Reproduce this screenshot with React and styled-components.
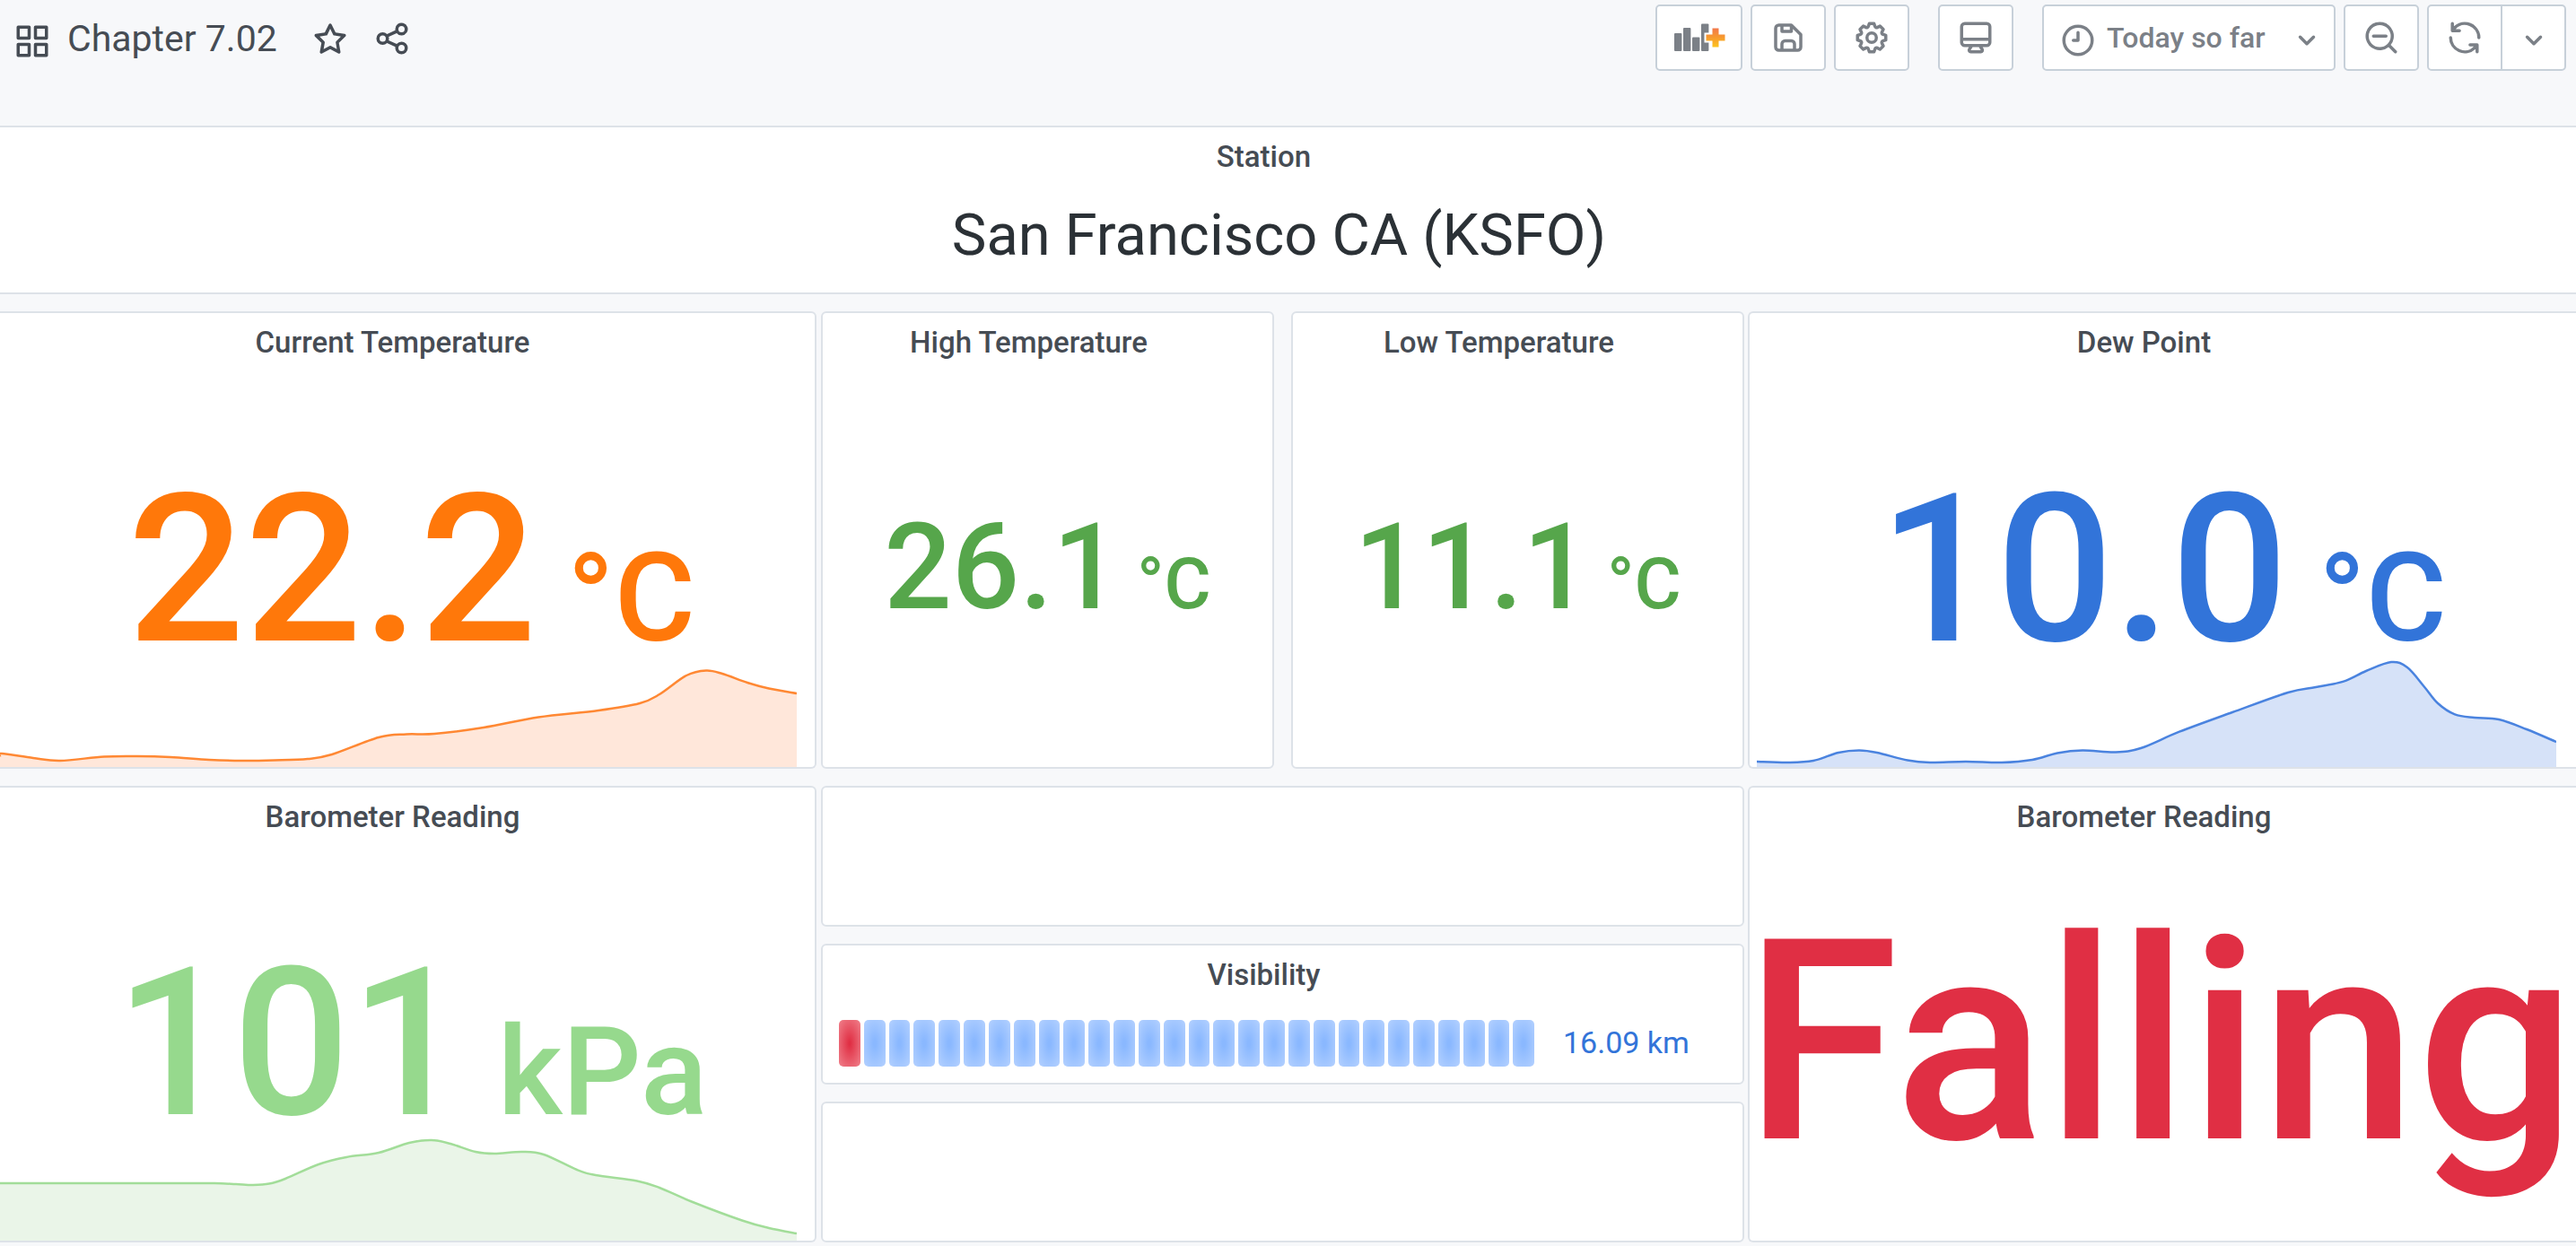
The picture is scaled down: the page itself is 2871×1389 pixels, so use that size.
import React from "react";
import styled, { createGlobalStyle } from "styled-components";

const GlobalStyle = createGlobalStyle`
  *, *::before, *::after { box-sizing: border-box; }
  body {
    margin: 0;
    background: #f7f8fa;
    color: #464c54;
    font-family: Roboto, "Liberation Sans", sans-serif;
    overflow-x: hidden;
  }
  h1, h2, p { margin: 0; }
`;

const Header = styled.header`
  display: flex;
  align-items: flex-start;
  justify-content: space-between;
  height: 140px;
  padding: 5px 11px 0 15px;
`;

const TitleGroup = styled.div`
  display: flex;
  align-items: center;
  height: 76px;
`;

const DashboardTitle = styled.h1`
  margin: 0 38px 0 18px;
  font-size: 41px;
  line-height: 46px;
  font-weight: 400;
  white-space: nowrap;
`;

const PlainButton = styled.button`
  display: flex;
  padding: 0;
  margin-right: 27px;
  border: 0;
  background: none;
  color: inherit;
  cursor: pointer;
`;

const Toolbar = styled.div`
  display: flex;
  gap: 32px;
`;

const ToolGroup = styled.div`
  display: flex;
  gap: ${(p) => (p.$joined ? "0" : "9px")};
`;

const ToolButton = styled.button`
  display: flex;
  align-items: center;
  justify-content: center;
  gap: 11px;
  width: ${(p) => p.$width || 84}px;
  height: 74px;
  padding: ${(p) => p.$pad || "0"};
  border: 2px solid #c7d0d9;
  border-radius: ${(p) => p.$radius || "5px"};
  margin-left: ${(p) => (p.$joined ? "-2px" : "0")};
  background: #fff;
  color: #7b8087;
  font-family: inherit;
  font-size: 32px;
  line-height: 40px;
  font-weight: 500;
  white-space: nowrap;
  cursor: pointer;
`;

const RangeLabel = styled.span`
  flex: 1;
  text-align: left;
`;

const IconSvg = styled.svg`
  display: block;
  flex: none;
  width: 42px;
  height: 42px;
  margin-top: ${(p) => (p.$low ? "6px" : "0")};
  fill: currentColor;
`;

const ChartPlusSvg = styled.svg`
  display: block;
  width: 58px;
  height: 32px;
`;

const Dashboard = styled.main`
  display: grid;
  grid-template-columns: 910fr 1030fr 923fr;
  grid-template-rows: 188px 510px 509px;
  gap: 19px 4px;
  padding-bottom: 4px;
`;

const edges = {
  none: "border-width: 2px 0; border-radius: 0; padding-right: 12px;",
  left: "border-left-width: 0; border-radius: 0 6px 6px 0;",
  right: "border-right-width: 0; border-radius: 6px 0 0 6px;",
};

const PanelBox = styled.section`
  display: flex;
  flex-direction: column;
  min-width: 0;
  background: #fff;
  border: 2px solid #dde2e8;
  border-radius: 6px;
  grid-column: ${(p) => (p.$wide ? "1 / -1" : "auto")};
  ${(p) => edges[p.$edge] || ""}
`;

const PanelTitle = styled.h2`
  flex: none;
  padding: 13px 42px 11px ${(p) => (p.$edge === "left" ? 9 : 0)}px;
  font-size: 33px;
  line-height: 40px;
  font-weight: 500;
  text-align: center;
  white-space: nowrap;
`;

const PanelBody = styled.div`
  flex: 1;
  display: grid;
  grid-template-columns: minmax(0, 1fr);
  grid-template-rows: minmax(0, 1fr);
`;

const Reading = styled.p`
  grid-area: 1 / 1;
  display: flex;
  align-self: center;
  justify-content: center;
  align-items: baseline;
  gap: ${(p) => p.$gap || 0}px;
  padding: ${(p) => p.$pad || "0"};
  color: ${(p) => p.$color};
  font-size: ${(p) => p.$size}px;
  line-height: 1;
  font-weight: ${(p) => p.$weight || 500};
  white-space: nowrap;
`;

const Unit = styled.span`
  font-size: ${(p) => p.$size}px;
`;

const SparkSvg = styled.svg`
  grid-area: 1 / 1;
  align-self: end;
  justify-self: ${(p) => (p.$start ? "start" : "end")};
  display: block;
  width: ${(p) => p.$inset};
  margin: ${(p) => p.$margin};
  height: 120px;
`;

const Column = styled.div`
  display: grid;
  gap: 19px;
  min-width: 0;
  padding-left: 1px;
  ${(p) =>
    p.$split ? "grid-template-columns: 1fr 1fr;" : "grid-template-rows: 1fr 1fr 1fr;"}
`;

const GaugeRow = styled.div`
  flex: 1;
  display: flex;
  align-items: flex-start;
  padding: 19px 20px 0 18px;
`;

const Cells = styled.div`
  flex: 1;
  display: flex;
  gap: 4px;
`;

const Cell = styled.span`
  flex: 1;
  height: 52px;
  border-radius: 5px;
  background: ${(p) =>
    p.$hot
      ? "radial-gradient(#e02f44 5%, #f0808b)"
      : "radial-gradient(#8ab8ff 10%, #b4d1ff)"};
`;

const GaugeValue = styled.output`
  width: 212px;
  padding-left: 32px;
  color: #3274d9;
  font-size: 34px;
  line-height: 50px;
  white-space: nowrap;
`;

const icons = {
  apps: "M10,13H3a1,1,0,0,0-1,1v7a1,1,0,0,0,1,1h7a1,1,0,0,0,1-1V14A1,1,0,0,0,10,13ZM9,20H4V15H9ZM21,2H14a1,1,0,0,0-1,1v7a1,1,0,0,0,1,1h7a1,1,0,0,0,1-1V3A1,1,0,0,0,21,2ZM20,9H15V4h5Zm1,4H14a1,1,0,0,0-1,1v7a1,1,0,0,0,1,1h7a1,1,0,0,0,1-1V14A1,1,0,0,0,21,13Zm-1,7H15V15h5ZM10,2H3A1,1,0,0,0,2,3v7a1,1,0,0,0,1,1h7a1,1,0,0,0,1-1V3A1,1,0,0,0,10,2ZM9,9H4V4H9Z",
  star: "M22,9.67A1,1,0,0,0,21.14,9l-5.69-.83L12.9,3a1,1,0,0,0-1.8,0L8.55,8.16,2.86,9a1,1,0,0,0-.81.68,1,1,0,0,0,.25,1l4.13,4-1,5.68A1,1,0,0,0,6.9,21.44L12,18.77l5.1,2.67a.93.93,0,0,0,.46.12,1,1,0,0,0,.59-.19,1,1,0,0,0,.4-1l-1-5.68,4.13-4A1,1,0,0,0,22,9.67Zm-6.15,4a1,1,0,0,0-.29.88l.72,4.2-3.76-2a1.06,1.06,0,0,0-.94,0l-3.76,2,.72-4.2a1,1,0,0,0-.29-.88l-3-3,4.21-.61a1,1,0,0,0,.76-.55L12,5.7l1.88,3.82a1,1,0,0,0,.76.55l4.21.61Z",
  share: "M18,14a4,4,0,0,0-3.08,1.48l-5.1-2.35a3.64,3.64,0,0,0,0-2.26l5.1-2.35A4,4,0,1,0,14,6a4.17,4.17,0,0,0,.07.71L8.79,9.14a4,4,0,1,0,0,5.72l5.28,2.43A4.17,4.17,0,0,0,14,18a4,4,0,1,0,4-4ZM18,4a2,2,0,1,1-2,2A2,2,0,0,1,18,4ZM6,14a2,2,0,1,1,2-2A2,2,0,0,1,6,14Zm12,6a2,2,0,1,1,2-2A2,2,0,0,1,18,20Z",
  save: "M20.71,9.29l-6-6a1,1,0,0,0-.32-.21A1.09,1.09,0,0,0,14,3H6A3,3,0,0,0,3,6V18a3,3,0,0,0,3,3H18a3,3,0,0,0,3-3V10A1,1,0,0,0,20.71,9.29ZM9,5h4V7H9Zm6,14H9V16a1,1,0,0,1,1-1h4a1,1,0,0,1,1,1Zm4-1a1,1,0,0,1-1,1H17V16a3,3,0,0,0-3-3H10a3,3,0,0,0-3,3v3H6a1,1,0,0,1-1-1V6A1,1,0,0,1,6,5H7V8A1,1,0,0,0,8,9h6a1,1,0,0,0,1-1V6.41l4,4Z",
  cog: "M21.32,9.55l-1.89-.63.89-1.78A1,1,0,0,0,20.13,6L18,3.87a1,1,0,0,0-1.15-.19l-1.78.89-.63-1.89A1,1,0,0,0,13.5,2h-3a1,1,0,0,0-.95.68L8.92,4.57,7.14,3.68A1,1,0,0,0,6,3.87L3.87,6a1,1,0,0,0-.19,1.15l.89,1.78-1.89.63A1,1,0,0,0,2,10.5v3a1,1,0,0,0,.68.95l1.89.63-.89,1.78A1,1,0,0,0,3.87,18L6,20.13a1,1,0,0,0,1.15.19l1.78-.89.63,1.89a1,1,0,0,0,.95.68h3a1,1,0,0,0,.95-.68l.63-1.89,1.78.89A1,1,0,0,0,18,20.13L20.13,18a1,1,0,0,0,.19-1.15l-.89-1.78,1.89-.63A1,1,0,0,0,22,13.5v-3A1,1,0,0,0,21.32,9.55ZM20,12.78l-1.2.4A2,2,0,0,0,17.64,16l.57,1.14-1.1,1.1L16,17.64a2,2,0,0,0-2.79,1.16l-.4,1.2H11.22l-.4-1.2A2,2,0,0,0,8,17.64l-1.14.57-1.1-1.1L6.36,16A2,2,0,0,0,5.2,13.18L4,12.78V11.22l1.2-.4A2,2,0,0,0,6.36,8L5.79,6.89l1.1-1.1L8,6.36A2,2,0,0,0,10.82,5.2l.4-1.2h1.56l.4,1.2A2,2,0,0,0,16,6.36l1.14-.57,1.1,1.1L17.64,8a2,2,0,0,0,1.16,2.79l1.2.4ZM12,8a4,4,0,1,0,4,4A4,4,0,0,0,12,8Zm0,6a2,2,0,1,1,2-2A2,2,0,0,1,12,14Z",
  monitor: "M19,2H5A3,3,0,0,0,2,5V15a3,3,0,0,0,3,3H7.64l-.58,1a2,2,0,0,0,0,2,2,2,0,0,0,1.75,1h6.46A2,2,0,0,0,17,21a2,2,0,0,0,0-2l-.59-1H19a3,3,0,0,0,3-3V5A3,3,0,0,0,19,2ZM8.77,20,10,18H14l1.2,2ZM20,15a1,1,0,0,1-1,1H5a1,1,0,0,1-1-1V14H20Zm0-3H4V5A1,1,0,0,1,5,4H19a1,1,0,0,1,1,1Z",
  clock: "M12,2A10,10,0,1,0,22,12,10,10,0,0,0,12,2Zm0,18a8,8,0,1,1,8-8A8,8,0,0,1,12,20ZM12,6a1,1,0,0,0-1,1v4H9a1,1,0,0,0,0,2h3a1,1,0,0,0,1-1V7A1,1,0,0,0,12,6Z",
  zoomOut: "M21.71,20.29,18,16.61A9,9,0,1,0,16.61,18l3.68,3.68a1,1,0,0,0,1.42,0A1,1,0,0,0,21.71,20.29ZM11,18a7,7,0,1,1,7-7A7,7,0,0,1,11,18Zm4-8H7a1,1,0,0,0,0,2h8a1,1,0,0,0,0-2Z",
  sync: "M19.91,15.51H15.38a1,1,0,0,0,0,2h2.4A8,8,0,0,1,4,12a1,1,0,0,0-2,0,10,10,0,0,0,16.88,7.23V21a1,1,0,0,0,2,0V16.5A1,1,0,0,0,19.91,15.51ZM12,2A10,10,0,0,0,5.12,4.77V3a1,1,0,0,0-2,0V7.5a1,1,0,0,0,1,1h4.5a1,1,0,0,0,0-2H6.22A8,8,0,0,1,20,12a1,1,0,0,0,2,0A10,10,0,0,0,12,2Z",
  down: "M17,9.17a1,1,0,0,0-1.41,0L12,12.71,8.46,9.17a1,1,0,0,0-1.41,0,1,1,0,0,0,0,1.42l4.24,4.24a1,1,0,0,0,1.42,0L17,10.59A1,1,0,0,0,17,9.17Z",
};

function Icon({ name, low }) {
  return (
    <IconSvg viewBox="0 0 24 24" $low={low} aria-hidden="true">
      <path d={icons[name]} />
    </IconSvg>
  );
}

function AddPanelIcon() {
  return (
    <ChartPlusSvg viewBox="0 0 58 32" aria-hidden="true">
      <defs>
        <linearGradient id="plus" x1="0" y1="0" x2="0" y2="1">
          <stop offset="0" stopColor="#f2784b" />
          <stop offset="0.5" stopColor="#f79b2e" />
          <stop offset="1" stopColor="#fdc41f" />
        </linearGradient>
      </defs>
      <g fill="#7b8087">
        <rect x="1" y="11" width="8.4" height="20" rx="1" />
        <rect x="11" y="5" width="8.4" height="26" rx="1" />
        <rect x="21" y="15.5" width="8.4" height="15.5" rx="1" />
        <rect x="31" y="0.5" width="8.4" height="30.5" rx="1" />
      </g>
      <path
        d="M43.5 5.5h7v7h7v7h-7v7h-7v-7h-7v-7h7z"
        fill="url(#plus)"
        stroke="#fff"
        strokeWidth="4"
        paintOrder="stroke"
      />
    </ChartPlusSvg>
  );
}

// Catmull-Rom spline through the samples
function curve(points) {
  let d = `M${points[0][0]},${points[0][1]}`;
  for (let i = 0; i < points.length - 1; i++) {
    const a = points[i - 1] || points[i];
    const b = points[i];
    const c = points[i + 1];
    const e = points[i + 2] || c;
    d += `C${b[0] + (c[0] - a[0]) / 6},${b[1] + (c[1] - a[1]) / 6} ${c[0] - (e[0] - b[0]) / 6},${
      c[1] - (e[1] - b[1]) / 6
    } ${c[0]},${c[1]}`;
  }
  return d;
}

const temperature = [
  [0, 108], [2, 105], [37, 110], [67, 113], [116, 108.5], [153, 108], [190, 109], [233, 112],
  [269, 113], [306, 112.5], [343, 111], [370, 106], [422, 87], [453, 83.5], [484, 83],
  [539, 76], [600, 64.5], [667, 57], [713, 49], [735, 39], [765, 18], [787, 12.5],
  [805, 16], [833, 26], [857, 32.5], [888, 38],
];

const dewPoint = [
  [0, 114], [35, 115], [63, 113], [91, 104], [114, 101.5], [134, 104], [168, 112.5],
  [193, 115], [233, 114], [273, 115], [307, 112], [335, 104.5], [363, 101.5], [400, 103.5],
  [428, 99], [471, 80.7], [530, 59], [592, 37], [623, 31], [654, 24.6], [679, 13],
  [707, 3], [725, 9], [744, 30.7], [759, 49], [778, 61.4], [800, 65],
  [827, 67], [858, 78], [891, 92],
];

const pressure = [
  [0, 56], [200, 56], [239, 56], [263, 57], [282, 58], [300, 56.6], [318, 51], [355, 35],
  [386, 27], [422, 22], [456, 11], [481, 8], [502, 12], [530, 21], [551, 23], [582, 21],
  [606, 24], [643, 41], [664, 47], [710, 53.5], [735, 61], [772, 77], [827, 97.5],
  [857, 106], [888, 112],
];

function Sparkline({ points, stroke, fill, inset, margin, start }) {
  const width = points[points.length - 1][0];
  const line = curve(points);
  return (
    <SparkSvg
      viewBox={`0 0 ${width} 120`}
      preserveAspectRatio="none"
      $inset={inset}
      $margin={margin}
      $start={start}
      aria-hidden="true"
    >
      <path d={`${line}V120H0Z`} fill={fill} />
      <path d={line} fill="none" stroke={stroke} strokeWidth="2.5" />
    </SparkSvg>
  );
}

function Panel({ title, edge, wide, children }) {
  return (
    <PanelBox $edge={edge} $wide={wide}>
      {title && <PanelTitle $edge={edge}>{title}</PanelTitle>}
      {children}
    </PanelBox>
  );
}

export default function App() {
  return (
    <>
      <GlobalStyle />
      <Header>
        <TitleGroup>
          <Icon name="apps" low />
          <DashboardTitle>Chapter 7.02</DashboardTitle>
          <PlainButton aria-label="Mark as favorite"><Icon name="star" /></PlainButton>
          <PlainButton aria-label="Share dashboard"><Icon name="share" /></PlainButton>
        </TitleGroup>
        <Toolbar>
          <ToolGroup>
            <ToolButton $width={97} aria-label="Add panel"><AddPanelIcon /></ToolButton>
            <ToolButton aria-label="Save dashboard"><Icon name="save" /></ToolButton>
            <ToolButton aria-label="Dashboard settings"><Icon name="cog" /></ToolButton>
          </ToolGroup>
          <ToolButton aria-label="Cycle view mode"><Icon name="monitor" /></ToolButton>
          <ToolGroup>
            <ToolButton $width={327} $pad="0 9px 0 17px">
              <Icon name="clock" low />
              <RangeLabel>Today so far</RangeLabel>
              <Icon name="down" low />
            </ToolButton>
            <ToolButton aria-label="Zoom out time range"><Icon name="zoomOut" /></ToolButton>
            <ToolGroup $joined>
              <ToolButton $radius="5px 0 0 5px" aria-label="Refresh"><Icon name="sync" /></ToolButton>
              <ToolButton $width={73} $joined $radius="0 5px 5px 0" aria-label="Refresh interval">
                <Icon name="down" low />
              </ToolButton>
            </ToolGroup>
          </ToolGroup>
        </Toolbar>
      </Header>
      <Dashboard>
        <Panel title="Station" edge="none" wide>
          <PanelBody>
            <Reading $color="#2b3136" $size={65} $weight={400} $pad="0 8px 8px 0">
              San Francisco CA (KSFO)
            </Reading>
          </PanelBody>
        </Panel>

        <Panel title="Current Temperature" edge="left">
          <PanelBody>
            <Reading $color="#ff780a" $size={230} $gap={34} $pad="3px 0 0 9px">
              22.2 <Unit $size={138}>°C</Unit>
            </Reading>
            <Sparkline
              points={temperature}
              stroke="#ff8833"
              fill="#ffe7da"
              inset="calc(100% - 20px)"
              margin="0"
              start
            />
          </PanelBody>
        </Panel>
        <Column $split>
          <Panel title="High Temperature">
            <PanelBody>
              <Reading $color="#56a64b" $size={133} $gap={18} $pad="0 0 3px">
                26.1 <Unit $size={80}>°C</Unit>
              </Reading>
            </PanelBody>
          </Panel>
          <Panel title="Low Temperature">
            <PanelBody>
              <Reading $color="#56a64b" $size={133} $gap={18} $pad="0 0 3px">
                11.1 <Unit $size={80}>°C</Unit>
              </Reading>
            </PanelBody>
          </Panel>
        </Column>
        <Panel title="Dew Point" edge="right">
          <PanelBody>
            <Reading $color="#3274d9" $size={230} $gap={34} $pad="3px 0 0">
              10.0 <Unit $size={138}>°C</Unit>
            </Reading>
            <Sparkline
              points={dewPoint}
              stroke="#4a83df"
              fill="#d6e2f8"
              inset="calc(100% - 30px)"
              margin="0 22px 0 0"
            />
          </PanelBody>
        </Panel>

        <Panel title="Barometer Reading" edge="left">
          <PanelBody>
            <Reading $color="#96d98d" $size={230} $gap={34} $pad="3px 0 0 9px">
              101 <Unit $size={138}>kPa</Unit>
            </Reading>
            <Sparkline
              points={pressure}
              stroke="#a2dd99"
              fill="#eaf5e8"
              inset="calc(100% - 20px)"
              margin="0"
              start
            />
          </PanelBody>
        </Panel>
        <Column>
          <Panel />
          <Panel title="Visibility">
            <GaugeRow>
              <Cells>
                {Array.from({ length: 28 }, (_, i) => (
                  <Cell key={i} $hot={i === 0} />
                ))}
              </Cells>
              <GaugeValue>16.09 km</GaugeValue>
            </GaugeRow>
          </Panel>
          <Panel />
        </Column>
        <Panel title="Barometer Reading" edge="right">
          <PanelBody>
            <Reading $color="#e02f44" $size={313} $pad="0 6px 0 0">Falling</Reading>
          </PanelBody>
        </Panel>
      </Dashboard>
    </>
  );
}
